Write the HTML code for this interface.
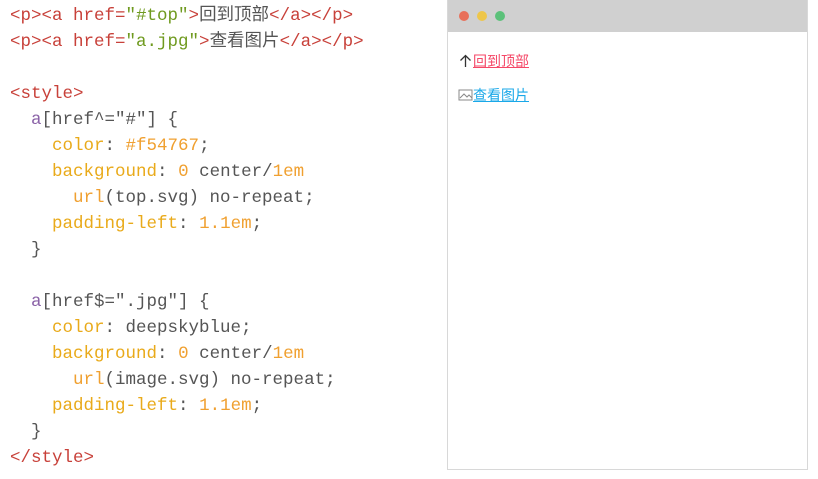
<!DOCTYPE html>
<html><head><meta charset="utf-8"><style>
body{margin:0;width:818px;height:479px;background:#fff;overflow:hidden;position:relative}
pre{position:absolute;left:10px;top:3px;margin:0;font-family:"Liberation Mono","Noto Sans CJK SC",monospace;font-size:17.5px;line-height:26px;color:#555}
.t{color:#c8413a}.s{color:#6f9a1f}.p{color:#e9aa1a}.n{color:#f0a030}.k{color:#8b63a8}
.win{position:absolute;left:447px;top:0;width:359px;height:469px;border:1px solid #d8d8d8;border-top:none;background:#fff}
.bar{height:32px;background:#d0d0d0}
.d{position:absolute;top:11px;width:10px;height:10px;border-radius:50%}
.l{position:absolute;left:10px;font-family:"Liberation Sans","Noto Sans CJK SC",sans-serif;font-size:14px}
.l a{text-decoration:underline}
</style></head><body>
<pre><span class="t">&lt;p&gt;&lt;a href=</span><span class="s">"#top"</span><span class="t">&gt;</span>回到顶部<span class="t">&lt;/a&gt;&lt;/p&gt;</span>
<span class="t">&lt;p&gt;&lt;a href=</span><span class="s">"a.jpg"</span><span class="t">&gt;</span>查看图片<span class="t">&lt;/a&gt;&lt;/p&gt;</span>

<span class="t">&lt;style&gt;</span>
  <span class="k">a</span>[href^="#"] {
    <span class="p">color</span>: <span class="n">#f54767</span>;
    <span class="p">background</span>: <span class="n">0</span> center/<span class="n">1em</span>
      <span class="n">url</span>(top.svg) no-repeat;
    <span class="p">padding-left</span>: <span class="n">1.1em</span>;
  }

  <span class="k">a</span>[href$=".jpg"] {
    <span class="p">color</span>: deepskyblue;
    <span class="p">background</span>: <span class="n">0</span> center/<span class="n">1em</span>
      <span class="n">url</span>(image.svg) no-repeat;
    <span class="p">padding-left</span>: <span class="n">1.1em</span>;
  }
<span class="t">&lt;/style&gt;</span></pre>
<div class="win"><div class="bar"></div>
<div class="d" style="left:11px;background:#e8705a"></div>
<div class="d" style="left:29px;background:#eec64a"></div>
<div class="d" style="left:47px;background:#5cc17a"></div>
<div class="l" style="top:51px"><svg width="15" height="14" viewBox="0 0 15 14" style="vertical-align:-2px"><path d="M7.5 13V1.5M2.5 6.5l5-5 5 5" fill="none" stroke="#333" stroke-width="1.3"/></svg><a style="color:#f54767">回到顶部</a></div>
<div class="l" style="top:85px"><svg width="15" height="12" viewBox="0 0 15 12" style="vertical-align:-1px"><rect x="1" y="1" width="13" height="10" fill="none" stroke="#888"/><path d="M2 9l4-4 3 3 2-2 3 3" fill="none" stroke="#888"/></svg><a style="color:#1aa8e8">查看图片</a></div>
</div>
</body></html>
